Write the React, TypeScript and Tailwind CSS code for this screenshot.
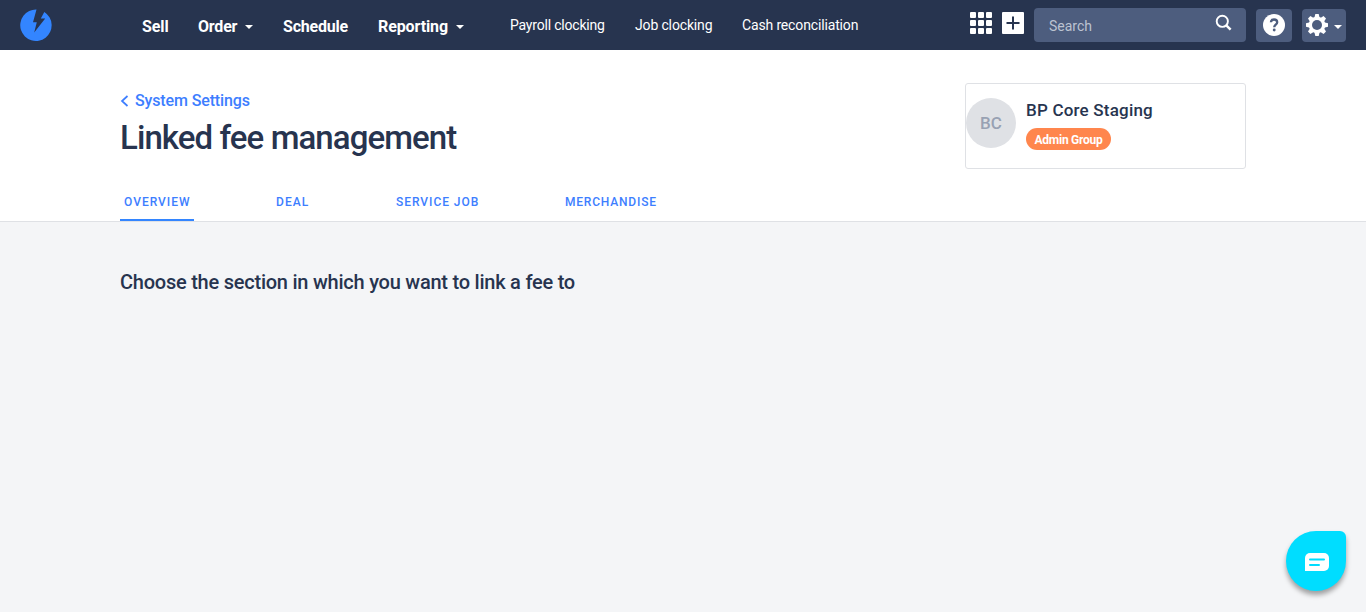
import React from 'react';

function Caret() {
  return (
    <svg width="8" height="4" viewBox="0 0 8 4" fill="currentColor" aria-hidden="true">
      <path d="M0 0h8L4 4z" />
    </svg>
  );
}

function Logo() {
  return (
    <svg width="32" height="33" viewBox="0 0 32 33" aria-hidden="true">
      <path
        fill="#3385ff"
        d="M16.500.600 13 13.200h3.800L14.200 23.500 25.200 9.500h-4.400L24.300 3A15.700 15.700 0 1 1 16.500.600z"
      />
    </svg>
  );
}

function NavBar() {
  return (
    <header className="flex h-[50px] shrink-0 bg-[#27344f] text-white">
      <a className="ml-5 mt-[9px] block h-[33px] w-[122px]" aria-label="Home">
        <Logo />
      </a>
      <nav className="flex text-[16px] font-bold leading-[20px] whitespace-nowrap pt-[17px]">
        <a className="w-[56px] tracking-[-0.1px]">Sell</a>
        <a className="flex w-[85px]">
          <span className="w-[47px] tracking-[-0.2px]">Order</span>
          <span className="pt-2"><Caret /></span>
        </a>
        <a className="w-[95px] tracking-[-0.2px]">Schedule</a>
        <a className="flex w-[132px]">
          <span className="w-[78px] tracking-[-0.1px]">Reporting</span>
          <span className="pt-2"><Caret /></span>
        </a>
      </nav>
      <nav className="flex grow text-[14px] leading-[20px] whitespace-nowrap pt-[15px]">
        <a className="w-[125px] tracking-[-0.2px]">Payroll clocking</a>
        <a className="w-[107px] tracking-[-0.15px]">Job clocking</a>
        <a className="tracking-[-0.15px]">Cash reconciliation</a>
      </nav>
      <div className="flex pr-5">
        <button className="mr-[10px] mt-3 grid size-[22px] grid-cols-3 gap-[2px]" aria-label="Apps">
          {Array.from({ length: 9 }, (_, i) => (
            <span key={i} className="size-[6px] rounded-[1px] bg-white" />
          ))}
        </button>
        <button className="mr-[10px] mt-3 size-[22px] rounded-[1px] bg-white" aria-label="Add">
          <svg width="22" height="22" viewBox="0 0 22 22" fill="#27344f">
            <path d="M10 4.500h2V10h5.500v2H12v5.500h-2V12H4.500v-2H10z" />
          </svg>
        </button>
        <div className="mr-[10px] mt-2 flex h-[34px] w-[212px] justify-between rounded-[4px] bg-[#4d5d7e] pl-[15px] pr-[14px]">
          <span className="pt-2 text-[14px] leading-[20px] text-[#bcc3d1]">Search</span>
          <svg className="mt-[6px]" width="17" height="17" viewBox="0 0 17 17" fill="none" stroke="white">
            <circle cx="7.300" cy="7.300" r="5.600" strokeWidth="1.900" />
            <path d="m11.300 11.300 4.300 4.300" strokeWidth="2.500" />
          </svg>
        </div>
        <button className="mr-[10px] mt-[9px] flex h-[33px] w-9 justify-center rounded-[4px] bg-[#4d5d7e] pt-[5px]" aria-label="Help">
          <svg width="22" height="22" viewBox="0 0 22 22">
            <circle cx="11" cy="11" r="11" fill="white" />
            <path d="M7.900 8.300C8 6.400 9.300 5.500 11 5.500c1.900 0 3.200 1.100 3.200 2.700 0 2.400-3 2.500-3 5" fill="none" stroke="#4d5d7e" strokeWidth="2.300" />
            <circle cx="11.200" cy="16" r="1.450" fill="#4d5d7e" />
          </svg>
        </button>
        <button className="mt-[9px] flex h-[33px] w-11 rounded-[4px] bg-[#4d5d7e] pl-1 pt-[5px]" aria-label="Settings">
          <svg width="22" height="22" viewBox="0 0 22 22">
            <g fill="white">
              <circle cx="11" cy="11" r="8.300" />
              {[0, 45, 90, 135].map((angle) => (
                <path key={angle} d="M9.300 0h3.400l1 4v14l-1 4H9.300l-1-4V4z" transform={`rotate(${angle} 11 11)`} />
              ))}
            </g>
            <circle cx="11" cy="11" r="5" fill="#4d5d7e" />
          </svg>
          <span className="ml-[6px] mt-[11px]"><Caret /></span>
        </button>
      </div>
    </header>
  );
}

export default function App() {
  return (
    <div className="flex h-[612px] flex-col overflow-hidden bg-[#f4f5f7] font-[Roboto,sans-serif] text-[#27344f]">
      <NavBar />
      <section className="flex h-[172px] shrink-0 justify-between border-b border-[#dfe1e5] bg-white pl-[120px] pr-[120px]">
        <div className="flex flex-col">
          <a className="mt-[41px] flex h-5 items-center text-[16px] font-medium leading-[20px] tracking-[-0.13px] text-[#3d7eff]">
            <svg className="mr-[6px]" width="9" height="12" viewBox="0 0 9 12" fill="none" stroke="currentColor" strokeWidth="1.700">
              <path d="M7.500 1 2 6l5.500 5" />
            </svg>
            System Settings
          </a>
          <h1 className="mt-[7px] h-10 text-[33px] font-medium leading-[40px] tracking-[-0.92px] whitespace-nowrap">Linked fee management</h1>
          <nav className="mt-[23px] flex h-[40px] text-[12px] font-medium leading-[20px] whitespace-nowrap text-[#3d7eff]">
            <a className="mr-[79px] h-[40px] w-[74px] border-b-2 border-[#3385ff] pl-[4px] pt-[11px] tracking-[1px]">OVERVIEW</a>
            <a className="w-[119px] pl-[3px] pt-[11px] tracking-[1.100px]">DEAL</a>
            <a className="w-[170px] pl-[4px] pt-[11px] tracking-[0.950px]">SERVICE JOB</a>
            <a className="pl-[3px] pt-[11px] tracking-[0.800px]">MERCHANDISE</a>
          </nav>
        </div>
        <div className="mt-[33px] flex h-[86px] w-[281px] rounded-[3px] border border-[#dfe1e5]">
          <div className="mt-[14px] flex size-[50px] items-center justify-center rounded-full bg-[#dfe1e5] pt-[2px] text-[17px] font-medium text-[#98a1b3]">BC</div>
          <div className="ml-[10px] flex flex-col items-start">
            <span className="mt-4 text-[17px] font-medium leading-[20px] tracking-[0.200px] whitespace-nowrap">BP Core Staging</span>
            <span className="mt-2 flex h-[22px] w-[85px] items-center justify-center rounded-full bg-[#ff864d] pt-px text-[12px] font-bold tracking-[-0.250px] whitespace-nowrap text-white">Admin Group</span>
          </div>
        </div>
      </section>
      <main className="flex grow flex-col justify-between pl-[120px]">
        <h2 className="mt-[47px] text-[20px] font-medium leading-[26px] tracking-[-0.235px] whitespace-nowrap">Choose the section in which you want to link a fee to</h2>
        <button className="mb-[21px] mr-5 flex size-[60px] items-center justify-center self-end rounded-[30px] rounded-tr-[6px] bg-[#00ddff] pl-[2px] pt-[2px] shadow-[0_4px_5px_rgba(0,0,0,0.35)]" aria-label="Chat">
          <svg width="24" height="18" viewBox="0 0 24 18">
            <path fill="white" d="M5 0h14a5 5 0 0 1 5 5v8a5 5 0 0 1-5 5H0V5a5 5 0 0 1 5-5z" />
            <path d="M5 6.500h14M5 12h9" stroke="#00ddff" strokeWidth="2" strokeLinecap="round" />
          </svg>
        </button>
      </main>
    </div>
  );
}
